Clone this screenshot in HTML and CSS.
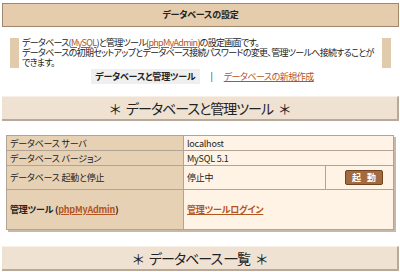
FILE: index.html
```html
<!DOCTYPE html>
<html lang="ja">
  <head>
    <meta charset="UTF-8" />
    <title>データベースの設定</title>
    <link rel="stylesheet" href="styles.css">
  </head>
  <body>
    <div class="page">
      <div class="title-bar">データベースの設定</div>

      <div class="desc">
        データベース(<a href="#">MySQL</a>)と管理ツール(<a href="#">phpMyAdmin</a>)の設定画面です。<br>
        データベースの初期セットアップとデータベース接続パスワードの変更、管理ツールへ接続することができます。
      </div>

      <div class="tabs">
        <span class="current">データベースと管理ツール</span>
        <span class="sep">|</span>
        <a href="#">データベースの新規作成</a>
      </div>

      <h2 class="section"><span class="star">＊</span>データベースと管理ツール<span class="star">＊</span></h2>

      <table class="info">
        <tr class="row-s">
          <th>データベース サーバ</th>
          <td colspan="2">localhost</td>
        </tr>
        <tr class="row-s">
          <th>データベース バージョン</th>
          <td colspan="2">MySQL 5.1</td>
        </tr>
        <tr class="row-m">
          <th>データベース 起動と停止</th>
          <td class="state">停止中</td>
          <td class="action"><button class="btn">起 動</button></td>
        </tr>
        <tr class="row-l">
          <th class="strong">管理ツール (<a href="#">phpMyAdmin</a>)</th>
          <td colspan="2" class="strong"><a href="#">管理ツールログイン</a></td>
        </tr>
      </table>

      <h2 class="section"><span class="star">＊</span>データベース 一覧<span class="star">＊</span></h2>
    </div>
  </body>
</html>
```

FILE: styles.css
```css
body {
  margin: 0;
  background: #fff;
  color: #222;
  font-family: "Noto Sans CJK JP", "DejaVu Sans", sans-serif;
  font-size: 9px;
  letter-spacing: -0.2px;
  font-feature-settings: "palt";
}
a {
  color: #b4551f;
}
.page {
  padding: 3px 1px 0 2px;
}
.title-bar {
  height: 22px;
  line-height: 22px;
  background: #e4ccac;
  border: 1px solid #a0866a;
  text-align: center;
  font-weight: bold;
}
.desc {
  margin: 11px 8px 0 8px;
  padding: 0 2px 0 3px;
  border-left: 9px solid #e2cbad;
  border-right: 9px solid #e2cbad;
  line-height: 10px;
  height: 30px;
  letter-spacing: -0.7px;
}
.tabs {
  margin-top: 1px;
  display: flex;
  justify-content: center;
  align-items: center;
  gap: 8px;
  height: 15px;
  padding-left: 4px;
}
.tabs .current {
  background: #efefef;
  padding: 1px 4px;
  font-weight: bold;
}
.tabs .sep {
  padding: 0 3px;
}
.tabs a {
  letter-spacing: -0.5px;
}
.section {
  margin: 12px 0 0 0;
  height: 22px;
  line-height: 22px;
  background: #efe2d2;
  border-top: 1px solid #f8f0e6;
  border-bottom: 2px solid #b9a99a;
  border-right: 2px solid #b9a99a;
  font-size: 14px;
  letter-spacing: -1px;
  font-weight: normal;
  text-align: center;
}
.section .star {
  margin: 0 6px;
}
.info {
  margin: 14px 0 16px 4px;
  width: 388px;
  border-collapse: collapse;
  box-shadow: 2px 2px 0 #c8b8a8;
}
.info th,
.info td {
  border: 1px solid #b3a394;
  padding: 0 3px;
  text-align: left;
}
.info th {
  width: 170px;
  background: #e6d1b5;
  font-weight: normal;
}
.info td {
  background: #fff3e5;
}
.info .strong {
  font-weight: bold;
}
.row-s th,
.row-s td {
  height: 14px;
}
.row-m th,
.row-m td {
  height: 23px;
}
.row-l th,
.row-l td {
  height: 39px;
}
.info .action {
  width: 52px;
  text-align: center;
  padding-left: 12px;
}
.btn {
  background: #a36a3e;
  color: #fff;
  border: 1px solid #6e4422;
  border-radius: 2px;
  font-family: inherit;
  font-size: 9px;
  font-weight: bold;
  letter-spacing: 2px;
  padding: 0 4px 0 6px;
  height: 15px;
  line-height: 12px;
}
```
